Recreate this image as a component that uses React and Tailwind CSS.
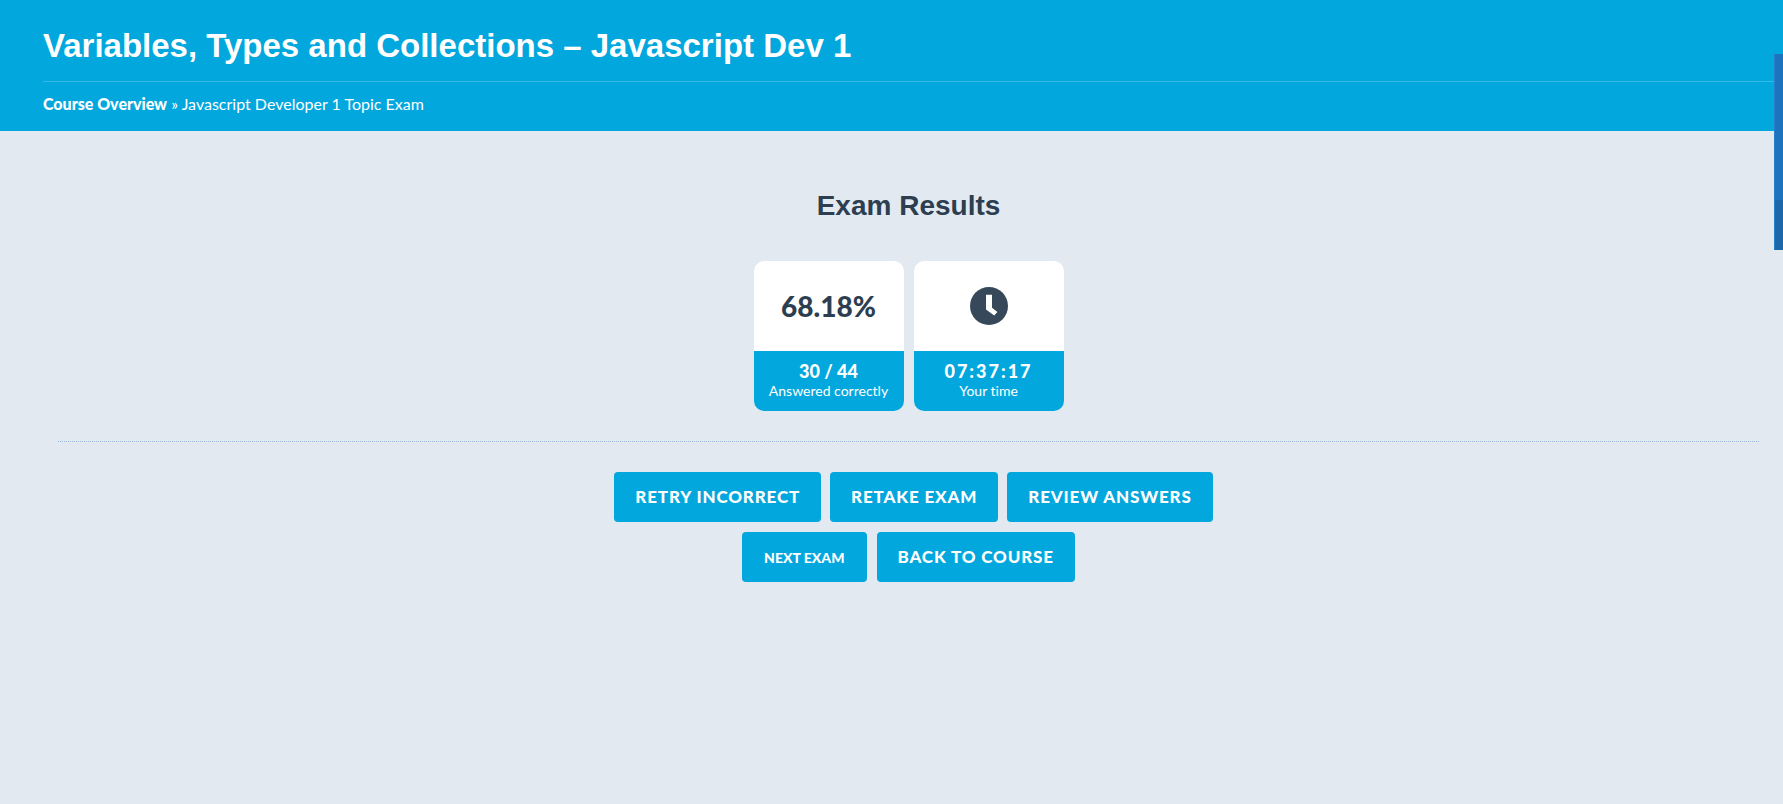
import React from "react";

function ResultCard({ top, value, label, wide }) {
  return (
    <li className="flex h-[150px] w-[150px] flex-col overflow-hidden rounded-[10px] bg-white text-center">
      <div className="flex h-[90px] items-center justify-center text-[28px] font-black text-[#2c3e50]">
        {top}
      </div>
      <div className="flex-1 bg-[#02a7de] pt-[10px] text-white">
        <div className={wide ? "text-[18px] leading-5 font-black tracking-[2px]" : "text-[18px] leading-5 font-black"}>
          {value}
        </div>
        <div className="text-[14px] leading-5">{label}</div>
      </div>
    </li>
  );
}

function ClockIcon() {
  return (
    <svg viewBox="0 0 38 38" className="h-[38px] w-[38px]" aria-hidden="true">
      <circle cx="19" cy="19" r="19" fill="#364859" />
      <path d="M16 7.8h6v13l5.4 4.2-3.2 3.6-8.2-6.2z" fill="#fff" />
    </svg>
  );
}

function ActionButton({ children, small }) {
  return (
    <button
      type="button"
      className={
        small
          ? "h-[50px] rounded-[4px] bg-[#02a7de] px-[22px] text-[14px] font-black text-white uppercase"
          : "h-[50px] rounded-[4px] bg-[#02a7de] px-[21px] text-[17px] font-black tracking-wider text-white uppercase"
      }
    >
      {children}
    </button>
  );
}

export default function App() {
  return (
    <div className="min-h-screen bg-[#e2e9f1] font-['Lato',sans-serif] [font-variant-ligatures:none]">
      <header className="h-[131px] bg-[#02a7de] pl-[43px] text-white">
        <h1 className="flex h-[81px] items-center pt-[10px] font-['Liberation_Sans',sans-serif] text-[33px] font-bold">
          Variables, Types and Collections – Javascript Dev 1
        </h1>
        <nav aria-label="Breadcrumb" className="border-t border-white/20 pt-[10px] text-[16px] leading-6">
          <a href="#course" className="font-black">Course Overview</a>
          {" » Javascript Developer 1 Topic Exam"}
        </nav>
      </header>

      <main className="flex flex-col items-center pr-6 pl-[58px]">
        <h2 className="mt-[55px] font-['Liberation_Sans',sans-serif] text-[28px] leading-10 font-bold text-[#2c3e50]">
          Exam Results
        </h2>
        <ul className="mt-[35px] flex gap-[10px]">
          <ResultCard top="68.18%" value="30 / 44" label="Answered correctly" />
          <ResultCard top={<ClockIcon />} value="07:37:17" label="Your time" wide />
        </ul>
        <hr className="mt-[30px] w-full border-0 border-t border-dotted border-[#9db9d9]" />
        <div className="mt-[30px] flex flex-wrap justify-center gap-[9px] pl-[10px]">
          <ActionButton>Retry Incorrect</ActionButton>
          <ActionButton>Retake Exam</ActionButton>
          <ActionButton>Review Answers</ActionButton>
        </div>
        <div className="mt-[10px] flex flex-wrap justify-center gap-[10px]">
          <ActionButton small>Next Exam</ActionButton>
          <ActionButton>Back to Course</ActionButton>
        </div>
      </main>

      <aside className="fixed top-[54px] right-0 h-[196px] w-[9px] border-l border-[#2b7fcb] bg-[#1e73be]">
        <div className="mt-[146px] h-[50px] bg-[#1c67a9]" />
      </aside>
    </div>
  );
}
